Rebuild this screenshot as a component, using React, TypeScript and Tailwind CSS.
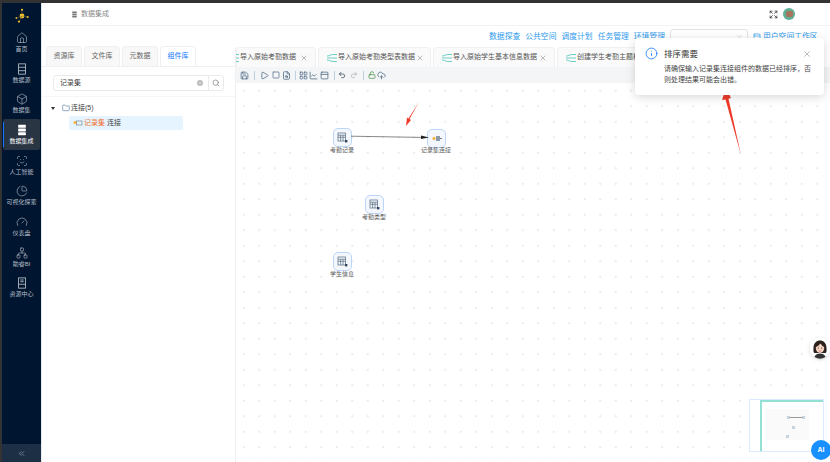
import { Box, ChartPie, ChevronDown, ChevronsLeft, CloudUpload, Expand, FileSearch, Folder, Gauge, Home, Info, LayoutGrid, LockOpen, Network, Play, Redo2, Save, ScanFace, Search, Square, Undo2, X, ChartLine, PanelTop } from 'lucide-react';

const NAV = [
  { label: '首页', icon: Home },
  { label: '数据源', icon: SourceIcon },
  { label: '数据集', icon: Box },
  { label: '数据集成', icon: StackIcon, active: true },
  { label: '人工智能', icon: ScanFace },
  { label: '可视化探索', icon: ChartPie },
  { label: '仪表盘', icon: Gauge },
  { label: '助睿BI', icon: Network },
  { label: '资源中心', icon: ResourceIcon },
];

const LINKS = ['数据探查', '公共空间', '调度计划', '任务管理', '环境管理'];

const TABS = [
  { label: '导入原始考勤数据', width: 'w-[80px]', iconClass: '-ml-[16px]' },
  { label: '导入原始考勤类型表数据', width: 'w-[113px]', iconClass: '' },
  { label: '导入原始学生基本信息数据', width: 'w-[122px]', iconClass: '' },
  { label: '创建学生考勤主题模型数据', width: 'w-[122px]', iconClass: '' },
];

function SourceIcon({ size = 13, className = '' }: { size?: number; className?: string }) {
  return (
    <svg width={size} height={size} viewBox="0 0 14 14" fill="none" stroke="currentColor" strokeWidth="1" className={className}>
      <rect x="3" y="1" width="8" height="12" />
      <path d="M3 5h8M3 9h8" />
    </svg>
  );
}

function StackIcon({ size = 13, className = '' }: { size?: number; className?: string }) {
  return (
    <svg width={size} height={size} viewBox="0 0 14 14" fill="currentColor" className={className}>
      <rect x="2.5" y="1" width="9" height="3.4" rx="0.5" />
      <rect x="2.5" y="5.3" width="9" height="3.4" rx="0.5" />
      <rect x="2.5" y="9.6" width="9" height="3.4" rx="0.5" />
    </svg>
  );
}

function ResourceIcon({ size = 13, className = '' }: { size?: number; className?: string }) {
  return (
    <svg width={size} height={size} viewBox="0 0 14 14" fill="none" stroke="currentColor" strokeWidth="1" className={className}>
      <rect x="3" y="1" width="8" height="12" />
      <path d="M5 3.5h4M5 5.5h4M3 8.5h8" />
    </svg>
  );
}

function Logo() {
  return (
    <svg width="16" height="16" viewBox="0 0 16 16">
      <circle cx="8" cy="8" r="2.4" fill="#f5c02e" />
      <circle cx="8" cy="1.8" r="1.1" fill="#f5c02e" />
      <circle cx="13.6" cy="9" r="1.1" fill="#f5c02e" />
      <circle cx="2.4" cy="10" r="0.9" fill="#f5c02e" />
      <circle cx="5" cy="13.6" r="1.1" fill="#f5c02e" />
      <path d="M8 2v4M8 8l5.5 1M8 8l-5.5 2M8 8l-3 5.5" stroke="#6d6a3c" strokeWidth="0.5" />
    </svg>
  );
}

function FlowIcon({ className = '' }: { className?: string }) {
  return (
    <svg width="10" height="8" viewBox="0 0 10 8" fill="none" stroke="#6fcfc6" strokeWidth="1" className={`shrink-0 ${className}`}>
      <path d="M0 2c3 0 3-1.5 6-1.5h4M0 4h10M0 6c3 0 3 1.5 6 1.5h4" />
    </svg>
  );
}

function TableNode({ label, x, y }: { label: string; x: number; y: number }) {
  return (
    <div className="absolute flex w-[40px] flex-col items-center" style={{ left: x, top: y }}>
      <div className="flex h-[19px] w-[19px] items-center justify-center rounded-[5px] border-[1.5px] border-[#bcd6f8] bg-[#f4f8fe]">
        <svg width="11" height="11" viewBox="0 0 11 11" fill="none" stroke="#66788a" strokeWidth="0.8">
          <rect x="1" y="1" width="7.5" height="8" />
          <path d="M1 3.2h7.5M1 5.3h7.5M3.6 3.2v5.8M6 3.2v5.8" />
          <rect x="8" y="8" width="2.4" height="2.4" fill="#33465a" stroke="none" />
        </svg>
      </div>
      <span className="whitespace-nowrap text-[6px] leading-[7px] text-[#555]">{label}</span>
    </div>
  );
}

function Avatar() {
  return (
    <svg width="22" height="22" viewBox="0 0 22 22">
      <circle cx="11" cy="11" r="10.5" fill="#fff" />
      <path d="M4.5 11c0-5 3-7.5 6.5-7.5s6.5 2.5 6.500 7.500c0 3 .5 4-1 5h-11c-1.500-1-1-2-1-5z" fill="#2d211d" />
      <ellipse cx="11" cy="11" rx="4.200" ry="5" fill="#f6d3c3" />
      <path d="M6.800 10c1.500-.5 3.500-2 4.700-3.500 1 1.500 2.500 3 3.700 3.500l-.3-3-4-2-4 2z" fill="#2d211d" />
      <circle cx="9.300" cy="11" r=".6" fill="#222" />
      <circle cx="12.700" cy="11" r=".6" fill="#222" />
      <path d="M10 14h2" stroke="#d4574f" strokeWidth=".7" />
      <path d="M5.500 20c1-3 3-3.500 5.500-3.500s4.500.5 5.500 3.500a10.500 10.500 0 0 1-11 0z" fill="#333" />
    </svg>
  );
}

export default function App() {
  return (
    <div className="flex h-[462px] w-[830px] flex-col overflow-hidden bg-white font-['Liberation_Sans','Noto_Sans_CJK_SC',sans-serif] text-[7px] text-[#555]">
      <div className="h-[3px] shrink-0 bg-[#333]" />
      <div className="flex min-h-0 flex-1">
        <div className="w-[2px] shrink-0 bg-[#333]" />

        {/* 左侧导航 */}
        <aside className="flex w-[39px] shrink-0 flex-col bg-[#00152f]">
          <div className="flex h-[24px] shrink-0 items-center justify-center pt-[1px]">
            <Logo />
          </div>
          <nav className="flex flex-1 flex-col items-center">
            {NAV.map((item) => (
              <div
                key={item.label}
                className={`relative flex h-[30.7px] w-[37px] shrink-0 flex-col items-center justify-center gap-[2px] rounded-[2px] ${item.active ? 'bg-[#2a3544] text-white' : 'text-[#b6bec8]'}`}
              >
                {item.active && <span className="absolute bottom-[3px] left-0 top-[3px] w-[1px] bg-[#1677ff]" />}
                <item.icon size={12} strokeWidth={1.2} />
                <span className="whitespace-nowrap text-[6px] leading-[7px]">{item.label}</span>
              </div>
            ))}
          </nav>
          <div className="flex h-[18px] shrink-0 items-center justify-center bg-[#1c2f45] text-[#8a97a6]">
            <ChevronsLeft size={9} />
          </div>
        </aside>

        <main className="flex min-w-0 flex-1 flex-col border-l border-[#e4e7ec]">
          {/* 顶栏 */}
          <header className="flex h-[23px] shrink-0 items-center border-b border-[#f3f3f3] pl-[29px] pr-[35px]">
            <StackIcon size={7} className="text-[#777]" />
            <span className="ml-[3px] text-[#8a8a8a]">数据集成</span>
            <Expand size={9} className="ml-auto text-[#333]" />
            <div className="ml-[5px] flex h-[12px] w-[12px] items-center justify-center overflow-hidden rounded-full bg-[#5fae96]">
              <div className="h-[6px] w-[7px] rounded-[2px] bg-[#a8735a]" />
            </div>
          </header>

          {/* 功能链接 */}
          <div className="flex h-[21px] shrink-0 items-center justify-end pr-[10px] text-[7.8px] text-[#2f9bec]">
            <div className="flex gap-[5px]">
              {LINKS.map((l) => (
                <span key={l}>{l}</span>
              ))}
            </div>
            <div className="ml-[5px] flex h-[16px] w-[78px] items-center justify-end rounded-[3px] border border-[#e2e2e2] pr-[4px] text-[#bbb]">
              <ChevronDown size={7} />
            </div>
            <div className="ml-[5px] flex w-[67px] items-center gap-[2px] whitespace-nowrap">
              <PanelTop size={8} />
              <span>用户空间工作区</span>
            </div>
          </div>

          <div className="flex min-h-0 flex-1">
            {/* 资源面板 */}
            <section className="flex w-[194px] shrink-0 flex-col border-r border-[#f0f0f0]">
              <div className="flex h-[20px] shrink-0 items-end gap-[2px] border-b border-[#f0f0f0] pl-[4px]">
                {['资源库', '文件库', '元数据', '组件库'].map((t) => (
                  <div
                    key={t}
                    className={`flex h-[20px] w-[36px] items-center justify-center rounded-t-[4px] border border-b-0 border-[#f0f0f0] ${t === '组件库' ? 'bg-white text-[#1677ff]' : 'bg-[#f8f8f8] text-[#666]'}`}
                  >
                    {t}
                  </div>
                ))}
              </div>
              <div className="border-b border-[#f6f6f6] px-[11px] pb-[5px] pt-[8px]">
                <div className="flex h-[16px] items-center rounded-[3px] border border-[#eaeaea] pl-[6px] text-[#444]">
                  <span>记录集</span>
                  <span className="ml-auto mr-[5px] flex h-[6px] w-[6px] items-center justify-center rounded-full bg-[#bbb]">
                    <X size={4} className="text-white" />
                  </span>
                  <span className="flex h-full w-[15px] items-center justify-center border-l border-[#eaeaea] text-[#777]">
                    <Search size={8} />
                  </span>
                </div>
              </div>
              <div className="pl-[9px] pt-[4px]">
                <div className="flex h-[14px] items-center">
                  <span className="mr-[7px] h-0 w-0 border-x-[2px] border-t-[3px] border-x-transparent border-t-[#333]" />
                  <Folder size={8} className="text-[#5c7da3]" />
                  <span className="ml-[1px] text-[#444]">连接(5)</span>
                </div>
                <div className="ml-[18px] mt-[1px] flex h-[14px] w-[114px] items-center rounded-[2px] bg-[#e6f4ff] pl-[4px]">
                  <svg width="10" height="7" viewBox="0 0 10 7" className="mr-[1px] shrink-0">
                    <circle cx="2" cy="2.500" r="1.600" fill="#f5b342" />
                    <rect x="3.500" y="1" width="5.500" height="4" fill="none" stroke="#7d8a96" strokeWidth=".7" />
                  </svg>
                  <span className="text-[#f0702c]">记录集</span>
                  <span className="ml-[2px] text-[#444]">连接</span>
                </div>
              </div>
            </section>

            {/* 画布区 */}
            <section className="flex min-w-0 flex-1 flex-col">
              <div className="flex h-[20px] shrink-0 items-end gap-[2px] overflow-hidden bg-white">
                {TABS.map((t) => (
                  <div
                    key={t.label}
                    className={`flex h-[20px] ${t.width} shrink-0 items-center gap-[1px] rounded-t-[4px] border border-b-0 border-[#f0f0f0] bg-[#fafafa] pl-[8px] text-[#555]`}
                  >
                    <FlowIcon className={t.iconClass} />
                    <span className="whitespace-nowrap">{t.label}</span>
                    <X size={8} className="ml-auto mr-[7px] shrink-0 text-[#999]" />
                  </div>
                ))}
              </div>
              <div className="flex h-[16px] shrink-0 items-center bg-[#f3f5f7] pl-[4px] text-[#4a6580]">
                <Save size={9} />
                <span className="ml-[5px] h-[9px] w-px bg-[#bcd0e2]" />
                <Play size={9} className="ml-[5px]" />
                <Square size={8} className="ml-[3px]" />
                <FileSearch size={9} className="ml-[2px]" />
                <span className="ml-[4px] h-[9px] w-px bg-[#bcd0e2]" />
                <LayoutGrid size={9} className="ml-[3px]" />
                <ChartLine size={9} className="ml-[1px]" />
                <PanelTop size={9} className="ml-[2px]" />
                <span className="ml-[5px] h-[9px] w-px bg-[#bcd0e2]" />
                <Undo2 size={8} className="ml-[3px] text-[#24364a]" />
                <Redo2 size={8} className="ml-[4px] text-[#aaa]" />
                <span className="ml-[5px] h-[9px] w-px bg-[#bcd0e2]" />
                <LockOpen size={8} className="ml-[4px] text-[#3a8a3a]" />
                <CloudUpload size={9} className="ml-[1px]" />
              </div>
              <div className="relative min-h-0 flex-1 bg-white bg-[radial-gradient(circle,#dcdcdc_0.6px,transparent_0.8px)] bg-[size:15.500px_15.500px]">
                <TableNode label="考勤记录" x={86} y={45} />
                <div className="absolute left-[191px] top-[46px] flex h-[19px] w-[19px] items-center justify-center rounded-[5px] border-[1.5px] border-[#bcd6f8] bg-[#f4f8fe]">
                  <svg width="11" height="9" viewBox="0 0 11 9">
                    <path d="M1 4.500l2-2 2 2-2 2z" fill="#f5b342" />
                    <rect x="5" y="2" width="4" height="5" fill="#8a9aa8" />
                    <path d="M9 4.500h2" stroke="#6a7a88" />
                  </svg>
                </div>
                <span className="absolute left-[185px] top-[64px] whitespace-nowrap text-[6px] leading-[7px] text-[#555]">记录集连接</span>
                <svg width="84" height="8" viewBox="0 0 84 8" className="absolute left-[115px] top-[50px]">
                  <path d="M0 3.200L76 4.500" stroke="#555" strokeWidth=".7" />
                  <path d="M70 2.500L78 4.500L70 6z" fill="#222" />
                </svg>
                <TableNode label="考勤类型" x={118} y={112} />
                <TableNode label="学生信息" x={86} y={169} />

                {/* 标注箭头 */}
                <svg width="24" height="30" viewBox="0 0 24 30" className="absolute left-[165px] top-[19px]">
                  <path d="M18 0L8.500 17L10 18L5 24L6 15.500L7.500 16.500z" fill="#ee3a2b" />
                </svg>
                <svg width="28" height="72" viewBox="0 0 28 72" className="absolute left-[482px] top-[5px]">
                  <path d="M8 0L4 12L7.500 11.500L23 67L10.500 10.800L13 10z" fill="#ee3a2b" />
                </svg>

                <div className="absolute left-[573px] top-[254px] drop-shadow">
                  <Avatar />
                </div>

                {/* 缩略图 */}
                <div className="absolute bottom-[10px] right-[6px] h-[53px] w-[75px] border border-[#dbeafe] bg-white/80">
                  <div className="ml-[10px] h-full border-l-2 border-t-2 border-[#93e0d4]">
                    <div className="relative ml-[3px] mt-[7px] h-[31px] w-[44px] bg-[#fafafa]">
                      <span className="absolute left-[22px] top-[7px] h-[3px] w-[3px] bg-[#c7d2e0]" />
                      <span className="absolute left-[25px] top-[8px] h-px w-[12px] bg-[#999]" />
                      <span className="absolute left-[37px] top-[7px] h-[3px] w-[3px] bg-[#c7d2e0]" />
                      <span className="absolute left-[27px] top-[17px] h-[3px] w-[3px] bg-[#c7d2e0]" />
                      <span className="absolute left-[21px] top-[26px] h-[3px] w-[3px] bg-[#c7d2e0]" />
                    </div>
                  </div>
                </div>
                <div className="absolute -right-px bottom-[2px] flex h-[20px] w-[20px] items-center justify-center rounded-full bg-[#1890ff] text-[7px] font-bold text-white">
                  AI
                </div>

                {/* 排序提示 */}
                <div className="absolute -top-[45px] left-[399px] h-[57px] w-[189px] rounded-[4px] bg-white pl-[29px] pr-[13px] pt-[10px] shadow-[0_2px_10px_rgba(0,0,0,0.16)]">
                  <Info size={13} strokeWidth={1.5} className="absolute left-[10px] top-[9px] text-[#1677ff]" />
                  <X size={10} strokeWidth={1.5} className="absolute right-[12px] top-[11px] text-[#999]" />
                  <div className="text-[8.500px] leading-[12px] text-[#333]">排序需要</div>
                  <p className="mt-[3px] text-[7px] leading-[11px] text-[#444]">请确保输入记录集连接组件的数据已经排序，否则处理结果可能会出错。</p>
                </div>
              </div>
            </section>
          </div>
        </main>
      </div>
    </div>
  );
}
